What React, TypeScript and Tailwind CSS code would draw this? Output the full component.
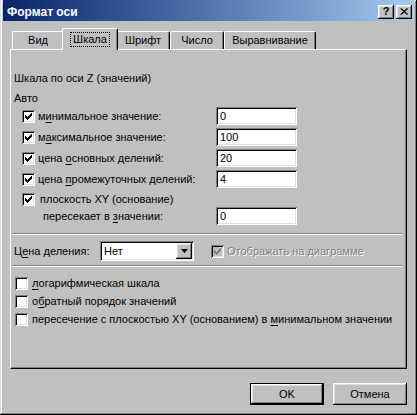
import React from 'react';

// classic 3D bevels
const sunken = "shadow-[inset_1px_1px_#808080,inset_-1px_-1px_#ffffff,inset_2px_2px_#000000,inset_-2px_-2px_#dfdfdf]";
const raised = "shadow-[inset_-1px_-1px_#000000,inset_1px_1px_#ffffff,inset_-2px_-2px_#808080,inset_2px_2px_#dfdfdf]";

function CheckBox({ checked, disabled }: { checked?: boolean; disabled?: boolean }) {
  return (
    <span className={`relative inline-block w-[13px] h-[13px] shrink-0 ${disabled ? 'bg-[#c0c0c0]' : 'bg-white'} ${sunken}`}>
      {checked && (
        <svg width="7" height="7" viewBox="0 0 7 7" className="absolute left-[3px] top-[3px]" fill={disabled ? '#808080' : '#000000'}>
          {[2, 3, 4, 3, 2, 1, 0].map((y, x) => (
            <rect key={x} x={x} y={y} width="1" height="3" />
          ))}
        </svg>
      )}
    </span>
  );
}

function Field({ value }: { value: string }) {
  return (
    <div className={`w-[81px] h-[18px] bg-white ${sunken} pl-[4px] flex items-center leading-[13px]`}>{value}</div>
  );
}

function Label({ pre, hot, post }: { pre: string; hot: string; post: string }) {
  return (
    <span className="leading-[13px] whitespace-nowrap">
      {pre}
      <span className="underline underline-offset-[2px]">{hot}</span>
      {post}
    </span>
  );
}

const tabs = [
  { label: 'Вид', w: 'w-[52px]' },
  { label: 'Шкала', w: 'w-[56px]', active: true },
  { label: 'Шрифт', w: 'w-[54px]' },
  { label: 'Число', w: 'w-[54px]' },
  { label: 'Выравнивание', w: 'w-[92px]' },
];

const autoRows = [
  { pre: 'м', hot: 'и', post: 'нимальное значение:', value: '0' },
  { pre: 'м', hot: 'а', post: 'ксимальное значение:', value: '100' },
  { pre: 'цена ', hot: 'о', post: 'сновных делений:', value: '20' },
  { pre: 'цена ', hot: 'п', post: 'ромежуточных делений:', value: '4' },
];

const options = [
  { pre: '', hot: 'л', post: 'огарифмическая шкала' },
  { pre: 'о', hot: 'б', post: 'ратный порядок значений' },
  { pre: 'пересечение с плоскостью XY (основанием) в ', hot: 'м', post: 'инимальном значении' },
];

export default function App() {
  return (
    <div className="w-[417px] h-[415px] bg-[#c0c0c0] px-[3px] pb-[3px] flex flex-col text-[11px] text-black font-['Liberation_Sans',Arial,sans-serif] shadow-[inset_-1px_-1px_#000000,inset_1px_1px_#dfdfdf,inset_-2px_-2px_#808080,inset_2px_2px_#ffffff]">
      {/* title bar */}
      <div className="h-[21px] shrink-0 flex items-center pt-[2px] pl-[4px] pr-[2px] bg-linear-to-r from-[#0a246a] to-[#a6caf0]">
        <span className="text-white font-bold text-[12px] leading-[14px] flex-1">Формат оси</span>
        <div className="flex gap-[2px]">
          <button className={`w-[16px] h-[14px] bg-[#c0c0c0] ${raised} flex items-center justify-center font-bold text-[11px] leading-[11px]`}>?</button>
          <button className={`w-[16px] h-[14px] bg-[#c0c0c0] ${raised} flex items-center justify-center`}>
            <svg width="8" height="7" viewBox="0 0 8 7">
              <path d="M0.5 0.5 L7 6.5 M1.5 0.5 L8 6.5 M7 0.5 L0.5 6.5 M8 0.5 L1.5 6.5" stroke="#000" strokeWidth="1" />
            </svg>
          </button>
        </div>
      </div>

      <div className="px-[7px] flex flex-col">
        {/* tabs */}
        <div className="mt-[7px] h-[21px] flex items-end pl-[2px]">
          {tabs.map((t) =>
            t.active ? (
              <div
                key={t.label}
                className={`${t.w} -mx-[2px] h-[22px] -mb-[1px] relative z-10 bg-[#c0c0c0] border-t border-l border-white border-r border-r-black rounded-t-[2px] shadow-[inset_-1px_0_#808080] flex items-start justify-center pt-[3px]`}
              >
                <span className="border border-dotted border-black px-[2px] leading-[12px] pb-[1px]">{t.label}</span>
              </div>
            ) : (
              <div
                key={t.label}
                className={`${t.w} h-[18px] border-t border-l border-white border-r border-r-black rounded-t-[2px] shadow-[inset_-1px_0_#808080] flex items-center justify-center leading-[13px]`}
              >
                {t.label}
              </div>
            )
          )}
        </div>

        {/* panel */}
        <div className="h-[320px] flex flex-col border-t border-l border-white border-r border-b border-r-black border-b-black shadow-[inset_-1px_-1px_#808080]">
          <div className="ml-[3px] mt-[22px] leading-[13px]">Шкала по оси Z (значений)</div>
          <div className="ml-[3px] mt-[7px] leading-[13px]">Авто</div>

          <div className="mt-[2px] flex flex-col gap-[3px]">
            {autoRows.map((r) => (
              <div key={r.value + r.post} className="h-[18px] flex items-center">
                <div className="w-[205px] pl-[11px] flex items-center gap-[3px]">
                  <CheckBox checked />
                  <Label pre={r.pre} hot={r.hot} post={r.post} />
                </div>
                <Field value={r.value} />
              </div>
            ))}
          </div>

          <div className="mt-[5px] h-[32px] flex">
            <div className="w-[205px] pl-[11px] flex flex-col">
              <div className="flex items-center gap-[5px] leading-[13px]">
                <CheckBox checked />
                <span>плоскость XY (основание)</span>
              </div>
              <div className="mt-[2px] pl-[21px]">
                <Label pre="пересекает в " hot="з" post="начении:" />
              </div>
            </div>
            <div className="self-end">
              <Field value="0" />
            </div>
          </div>

          <div className="mt-[8px] ml-[2px] mr-[4px] border-t border-t-[#808080] border-b border-b-white" />

          <div className="mt-[6px] h-[20px] flex items-center">
            <div className="ml-[3px] w-[86px]">
              <Label pre="Ц" hot="е" post="на деления:" />
            </div>
            <div className={`w-[94px] h-[20px] bg-white ${sunken} flex items-center p-[2px]`}>
              <span className="flex-1 pl-[2px] leading-[13px]">Нет</span>
              <div className={`w-[16px] h-[16px] bg-[#c0c0c0] ${raised} flex items-center justify-center`}>
                <svg width="7" height="4" viewBox="0 0 7 4" fill="#000">
                  <path d="M0 0 H7 L3.5 4 Z" />
                </svg>
              </div>
            </div>
            <div className="ml-[17px] flex items-center gap-[3px]">
              <CheckBox checked disabled />
              <span className="text-[#808080] leading-[13px] [text-shadow:1px_1px_0_#ffffff]">Отображать на диаграмме</span>
            </div>
          </div>

          <div className="mt-[4px] ml-[2px] mr-[4px] border-t border-t-[#808080] border-b border-b-white" />

          <div className="mt-[7px] flex flex-col">
            {options.map((o) => (
              <div key={o.post} className="h-[18px] ml-[4px] flex items-center gap-[4px]">
                <CheckBox />
                <Label pre={o.pre} hot={o.hot} post={o.post} />
              </div>
            ))}
          </div>
        </div>

        {/* buttons */}
        <div className="mt-[14px] flex justify-end gap-[9px]">
          <button className="w-[74px] h-[22px] border border-black bg-[#c0c0c0] shadow-[inset_-1px_-1px_#000000,inset_1px_1px_#ffffff,inset_-2px_-2px_#808080,inset_2px_2px_#dfdfdf] leading-[13px]">
            OK
          </button>
          <button className={`w-[74px] h-[22px] bg-[#c0c0c0] ${raised} leading-[13px]`}>Отмена</button>
        </div>
      </div>
    </div>
  );
}
